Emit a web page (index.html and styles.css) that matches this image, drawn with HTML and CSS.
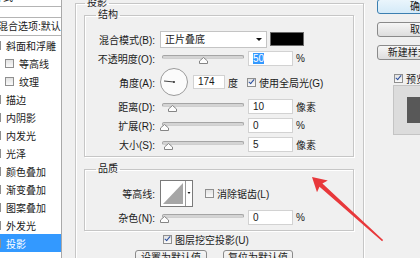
FILE: index.html
```html
<!DOCTYPE html>
<html lang="zh-CN">
<head>
    <meta charset="UTF-8">
    <title>图层样式 - 投影</title>
    <link rel="stylesheet" href="styles.css">
</head>
<body>
    <div class="dialog">
        <div class="styles">
            <div class="styles-head">样式</div>
            <div class="styles-blend">混合选项:默认</div>
            <ul class="fx-list">
                <li><span class="cb"></span>斜面和浮雕</li>
                <li class="sub"><span class="cb"></span>等高线</li>
                <li class="sub"><span class="cb"></span>纹理</li>
                <li><span class="cb"></span>描边</li>
                <li><span class="cb"></span>内阴影</li>
                <li><span class="cb"></span>内发光</li>
                <li><span class="cb"></span>光泽</li>
                <li><span class="cb"></span>颜色叠加</li>
                <li><span class="cb"></span>渐变叠加</li>
                <li><span class="cb"></span>图案叠加</li>
                <li><span class="cb"></span>外发光</li>
                <li class="selected"><span class="cb on"></span>投影</li>
            </ul>
        </div>

        <div class="panel">
            <fieldset class="group outer">
                <legend>投影</legend>

                <fieldset class="group structure">
                    <legend>结构</legend>
                    <div class="row">
                        <span class="label">混合模式(B):</span>
                        <div class="select">正片叠底<span class="caret"></span></div>
                        <span class="swatch"></span>
                    </div>
                    <div class="row">
                        <span class="label">不透明度(O):</span>
                        <div class="slider"><span class="track"></span><span class="thumb" style="left: 37px"></span></div>
                        <div class="num"><span class="sel">50</span></div>
                        <span class="unit">%</span>
                    </div>
                    <div class="row tall">
                        <span class="label">角度(A):</span>
                        <div class="dial">
                            <svg width="28" height="28" viewBox="0 0 28 28">
                                <circle cx="14" cy="14" r="13.5" fill="#fbfbfb" stroke="#9a9a9a"/>
                                <line x1="14" y1="14" x2="4" y2="13" stroke="#444" stroke-width="1"/>
                                <circle cx="14" cy="14" r="1" fill="#333"/>
                            </svg>
                        </div>
                        <div class="num angle">174</div>
                        <span class="deg">度</span>
                        <span class="cb on global"></span>
                        <span class="cb-text">使用全局光(G)</span>
                    </div>
                    <div class="row">
                        <span class="label">距离(D):</span>
                        <div class="slider"><span class="track"></span><span class="thumb" style="left: 6px"></span></div>
                        <div class="num">10</div>
                        <span class="unit">像素</span>
                    </div>
                    <div class="row">
                        <span class="label">扩展(R):</span>
                        <div class="slider"><span class="track"></span><span class="thumb" style="left: -2px"></span></div>
                        <div class="num">0</div>
                        <span class="unit">%</span>
                    </div>
                    <div class="row">
                        <span class="label">大小(S):</span>
                        <div class="slider"><span class="track"></span><span class="thumb" style="left: 2px"></span></div>
                        <div class="num">5</div>
                        <span class="unit">像素</span>
                    </div>
                </fieldset>

                <fieldset class="group quality">
                    <legend>品质</legend>
                    <div class="row tall">
                        <span class="label">等高线:</span>
                        <div class="contour">
                            <svg width="33" height="27" viewBox="0 0 33 27">
                                <rect x="0.5" y="0.5" width="32" height="26" fill="#fff" stroke="#7a7a7a"/>
                                <polygon points="3,24 23,3 23,24" fill="#a6a6a6"/>
                                <line x1="25.5" y1="1" x2="25.5" y2="26" stroke="#9a9a9a"/>
                                <polygon points="27.5,12 30.5,12 29,14" fill="#111"/>
                            </svg>
                        </div>
                        <span class="cb aa"></span>
                        <span class="cb-text">消除锯齿(L)</span>
                    </div>
                    <div class="row">
                        <span class="label">杂色(N):</span>
                        <div class="slider"><span class="track"></span><span class="thumb" style="left: -2px"></span></div>
                        <div class="num">0</div>
                        <span class="unit">%</span>
                    </div>
                </fieldset>

                <div class="knockout"><span class="cb on"></span><span class="cb-text">图层挖空投影(U)</span></div>
                <div class="defaults">
                    <button class="btn wide">设置为默认值</button>
                    <button class="btn">复位为默认值</button>
                </div>
            </fieldset>
        </div>

        <div class="side">
            <button class="btn side-btn primary">确定</button>
            <button class="btn side-btn">取消</button>
            <button class="btn side-btn">新建样式(W)...</button>
            <div class="preview-check"><span class="cb on"></span><span class="cb-text">预览(V)</span></div>
            <div class="preview"><span class="preview-swatch"></span></div>
        </div>
    </div>

    <svg class="arrow" width="420" height="258" viewBox="0 0 420 258">
        <polygon points="312,177 327.8,180.4 322.4,183.4 383.1,240 382.1,241.2 319.5,186.7 317,192.3" fill="#e8383b"/>
    </svg>
</body>
</html>
```

FILE: styles.css
```css
body {
    margin: 0;
    width: 420px;
    height: 258px;
    overflow: hidden;
    background: #f0f0f0;
    font-family: "Liberation Sans", "Noto Sans CJK SC", sans-serif;
    font-size: 10px;
    color: #1a1a1a;
    position: relative;
}
.dialog {
    display: flex;
    align-items: flex-start;
}

/* left list */
.styles {
    flex: none;
    margin-left: -10px;
    margin-top: -10px;
    width: 71px;
    height: 280px;
    background: #fff;
    border-right: 1px solid #a9a9a9;
    white-space: nowrap;
}
.styles-head {
    height: 16px;
    line-height: 16px;
    padding-left: 3px;
    border-bottom: 1px solid #b4b4b4;
    margin-bottom: 10px;
}
.styles-blend {
    height: 17px;
    line-height: 17px;
    padding-left: 8px;
    border-top: 1px solid #b4b4b4;
    border-bottom: 1px solid #b4b4b4;
}
.fx-list {
    list-style: none;
    margin: 0;
    padding: 0;
}
.fx-list li {
    height: 18px;
    display: flex;
    align-items: center;
    padding-left: 2px;
}
.fx-list li .cb {
    margin-right: 5px;
}
.fx-list li.sub {
    padding-left: 15px;
}
.fx-list li.selected {
    background: #3399ff;
    color: #fff;
}

/* checkboxes */
.cb {
    display: inline-block;
    position: relative;
    width: 9px;
    height: 9px;
    box-sizing: border-box;
    border: 1px solid #8f8f8f;
    background: linear-gradient(#e2e2e2, #fafafa);
    flex: none;
}
.cb.on::after {
    content: "";
    position: absolute;
    left: 2px;
    top: -1px;
    width: 2px;
    height: 5px;
    border: solid #2b4f9e;
    border-width: 0 1.5px 1.5px 0;
    transform: rotate(40deg);
}
.cb-text {
    margin-left: 3px;
    white-space: nowrap;
}

/* group boxes */
.group {
    margin: 0;
    min-width: 0;
    border: 1px solid #c6c6c6;
    box-shadow: inset 1px 1px 0 #fff, 1px 1px 0 #fff;
}
.group legend {
    padding: 0 2px;
    line-height: 12px;
}
.panel {
    flex: none;
    margin-left: 13px;
    margin-top: -3px;
    white-space: nowrap;
}
.outer {
    width: 289px;
    height: 300px;
    padding: 0 9px 0 8px;
    box-sizing: border-box;
}
.outer > legend {
    margin-left: 1px;
}
.structure,
.quality {
    padding: 9px 0 3px 0;
    display: flex;
    flex-direction: column;
    gap: 1px;
}
.structure > legend,
.quality > legend {
    margin-left: 11px;
}
.quality {
    margin-top: 6px;
    padding: 4px 0 4px 0;
}

.row {
    height: 18px;
    display: flex;
    align-items: center;
}
.row.tall {
    height: 28px;
}
.label {
    width: 70px;
    text-align: right;
    flex: none;
}
.select {
    flex: none;
    margin-left: 5px;
    width: 107px;
    height: 17px;
    box-sizing: border-box;
    background: #fff;
    border: 1px solid #c4c4c4;
    padding-left: 4px;
    line-height: 15px;
    position: relative;
}
.caret {
    position: absolute;
    right: 4px;
    top: 6px;
    border-left: 3px solid transparent;
    border-right: 3px solid transparent;
    border-top: 3px solid #111;
}
.swatch {
    flex: none;
    margin-left: 3px;
    width: 34px;
    height: 14px;
    background: #000;
    box-sizing: border-box;
    border: 1px solid #6a6a6a;
}

.slider {
    flex: none;
    position: relative;
    margin-left: 7px;
    width: 82px;
    height: 18px;
}
.track {
    position: absolute;
    left: 0;
    right: 0;
    top: 6px;
    height: 4px;
    box-sizing: border-box;
    border-radius: 2px;
    background: #d4d4d4;
    border: 1px solid #a5a5a5;
    border-bottom-color: #cfcfcf;
}
.thumb {
    position: absolute;
    top: 8px;
    width: 9px;
    height: 7px;
    background: url("data:image/svg+xml;utf8,<svg xmlns='http://www.w3.org/2000/svg' width='9' height='7'><path d='M0.5 6.5 L0.5 4 L4.5 0.5 L8.5 4 L8.5 6.5 Z' fill='%23fdfdfd' stroke='%23858585'/></svg>");
}
.num {
    flex: none;
    margin-left: 4px;
    width: 45px;
    height: 15px;
    box-sizing: border-box;
    background: #fff;
    border: 1px solid #d2d2d2;
    padding-left: 4px;
    line-height: 13px;
}
.num .sel {
    background: #3399ff;
    color: #fff;
}
.unit {
    margin-left: 3px;
}
.dial {
    flex: none;
    margin-left: 5px;
    width: 28px;
    height: 28px;
}
.dial svg,
.contour svg {
    display: block;
}
.num.angle {
    margin-left: 5px;
    width: 32px;
    height: 14px;
    line-height: 12px;
}
.deg {
    margin-left: 3px;
}
.cb.global {
    margin-left: 9px;
}
.contour {
    flex: none;
    margin-left: 5px;
}
.cb.aa {
    margin-left: 12px;
}

.knockout {
    margin-top: 1px;
    height: 14px;
    display: flex;
    align-items: center;
    padding-left: 79px;
}
.btn {
    font-family: inherit;
    font-size: 10px;
    color: #1a1a1a;
    box-sizing: border-box;
    border: 1px solid #8a8a8a;
    border-radius: 3px;
    background: linear-gradient(#f6f6f6, #dddddd);
    padding: 0;
    white-space: nowrap;
    cursor: pointer;
}
.defaults {
    margin-top: 4px;
    padding-left: 51px;
    display: flex;
    gap: 16px;
}
.defaults .btn {
    flex: none;
    width: 70px;
    height: 20px;
    line-height: 14px;
    padding-bottom: 4px;
}
.defaults .btn.wide {
    width: 72px;
}

/* right column */
.side {
    margin-left: 13px;
    margin-top: -1px;
    width: 86px;
    flex: none;
    display: flex;
    flex-direction: column;
}
.side-btn {
    width: 86px;
    height: 15px;
    line-height: 13px;
    margin-bottom: 8px;
}
.side-btn.primary {
    border-color: #3c7fb1;
    background: linear-gradient(#eaf5fc, #d4eaf8);
}
.preview-check {
    margin-top: 3px;
    height: 14px;
    display: flex;
    align-items: center;
    padding-left: 17px;
}
.preview {
    margin-left: 16px;
    width: 54px;
    height: 50px;
    box-sizing: border-box;
    background: #dcdcdc;
    border: 1px solid #c4c4c4;
    padding: 11px 0 0 13px;
}
.preview-swatch {
    display: block;
    width: 26px;
    height: 26px;
    background: #585858;
}

.arrow {
    position: absolute;
    left: 0;
    top: 0;
    pointer-events: none;
}
```
